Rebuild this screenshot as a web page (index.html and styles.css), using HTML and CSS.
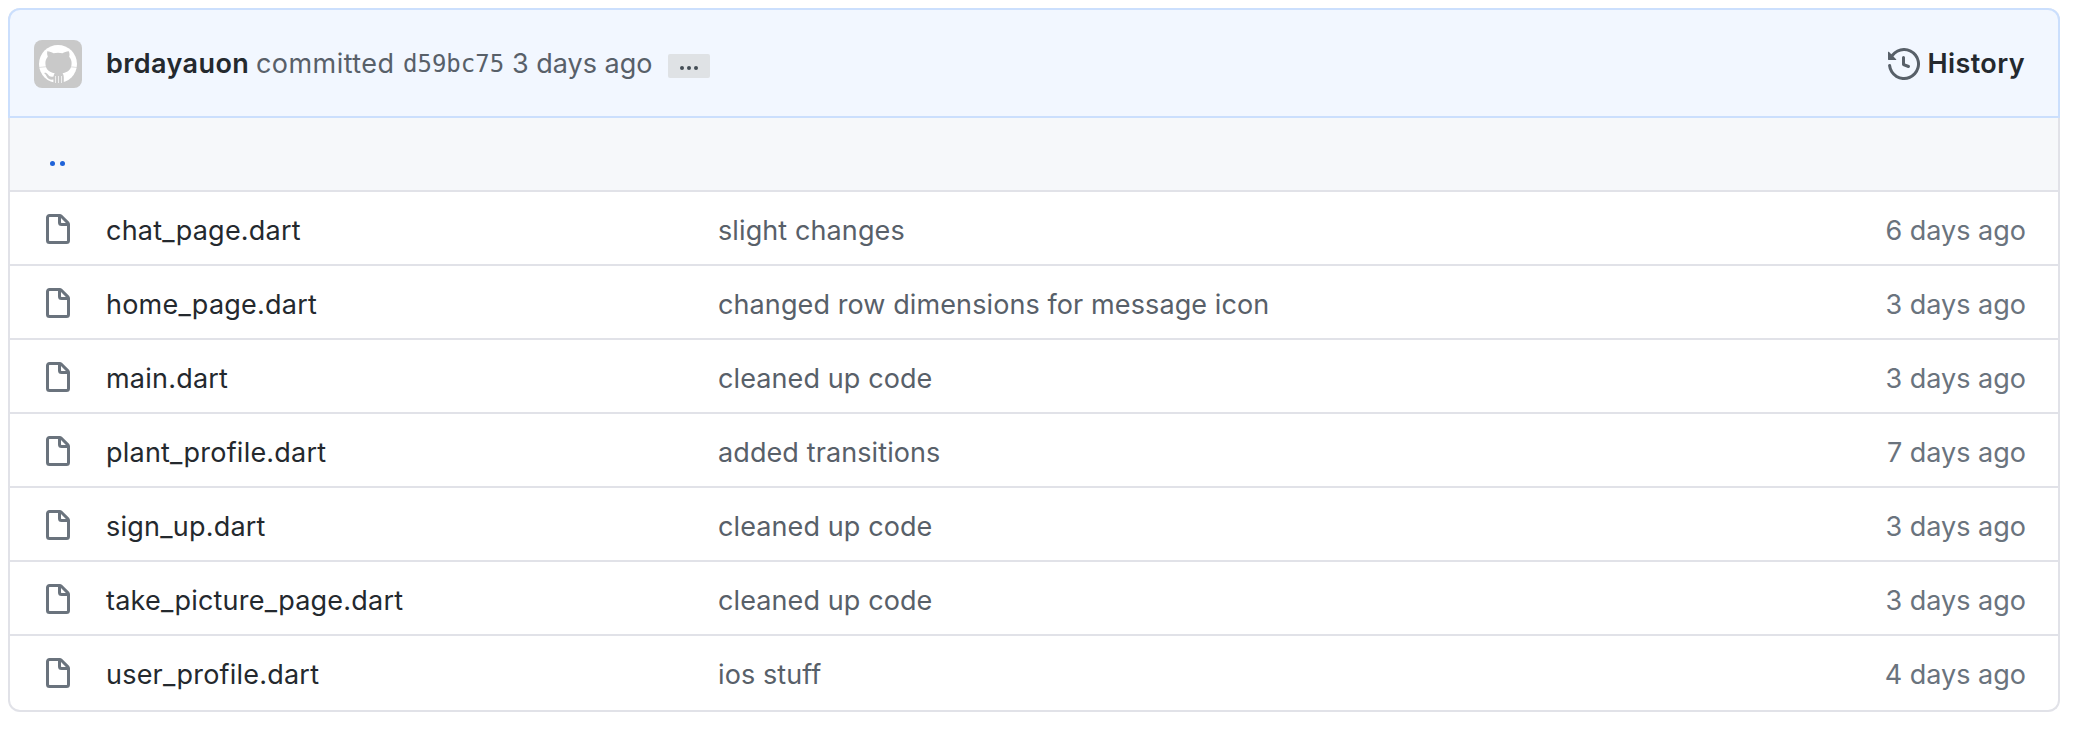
FILE: index.html
```html
<!DOCTYPE html>
<html lang="en">
<head>
<meta charset="utf-8">
<title>Files</title>
<link rel="stylesheet" href="styles.css">
</head>
<body>
<svg class="defs" aria-hidden="true">
  <symbol id="file" viewBox="0 0 16 16"><path fill-rule="evenodd" d="M3.75 1.5a.25.25 0 00-.25.25v11.5c0 .138.112.25.25.25h8.5a.25.25 0 00.25-.25V6H9.75A1.75 1.75 0 018 4.25V1.5H3.75zm5.75.56v2.19c0 .138.112.25.25.25h2.19L9.5 2.06zM2 1.75C2 .784 2.784 0 3.75 0h5.086c.464 0 .909.184 1.237.513l3.414 3.414c.329.328.513.773.513 1.237v8.086A1.75 1.75 0 0112.25 15h-8.5A1.75 1.75 0 012 13.25V1.75z"/></symbol>
</svg>
<main class="box">
  <header class="commit">
    <svg class="avatar" viewBox="0 0 48 48">
      <rect width="48" height="48" fill="#c9c9c9"/>
      <circle cx="24" cy="24" r="19" fill="#fff"/>
      <path fill="#c9c9c9" d="M13.2 11.2c2.5 0 4.5 1 6.300 2.100 3-.7 6-.7 9 0 1.800-1.100 3.800-2.100 6.300-2.100.9 2.100.9 4 .4 5.600 1.600 1.800 2.400 3.900 2.400 6.300 0 6.200-3.300 9.300-9 10.100.8 1 1.200 2.200 1.200 3.700V43H19.400v-3.400c-3.700.5-5.600-.8-6.800-3.300-.6-1.300-1.300-2.300-2.400-3 .9-1 2.400-.3 3.700 1.300 1.500 2.100 3 2.600 5.600 2 .1-1.400.5-2.500 1.200-3.400-6.200-.9-9.300-4.100-9.300-10.100 0-2.400.8-4.500 2.400-6.300-.7-1.800-.9-3.700-.6-5.600z"/>
      <path stroke="#fff" stroke-width=".9" d="M21.500 36v7M24.500 36v7M27.500 36v7" opacity=".75"/>
      <path stroke="#c9c9c9" stroke-width=".8" d="M5 27.500l7-.8M43 27.500l-7-.8" opacity=".7"/>
    </svg>
    <div class="message">
      <span class="author">brdayauon</span>
      <span class="verb">committed</span>
      <span class="sha">d59bc75</span>
      <span class="when">3 days ago</span>
      <span class="more"><i></i><i></i><i></i></span>
    </div>
    <div class="history">
      <svg class="icon" viewBox="0 0 16 16"><path fill-rule="evenodd" d="M1.643 3.143L.427 1.927A.25.25 0 000 2.104V5.75c0 .138.112.25.25.25h3.646a.25.25 0 00.177-.427L2.715 4.215a6.5 6.500 0 11-1.180 4.458.75.75 0 10-1.493.154 8.001 8.001 0 101.600-5.684zM7.750 4a.75.75 0 01.75.75v2.992l2.028.812a.75.75 0 01-.557 1.392l-2.500-1A.75.75 0 017 8.250v-3.500A.75.75 0 017.750 4z"/></svg>
      <span class="history-label">History</span>
    </div>
  </header>
  <div class="parent"><span class="dot"></span><span class="dot"></span></div>
  <div class="row"><svg class="icon"><use href="#file"/></svg><span class="name">chat_page.dart</span><span class="note">slight changes</span><span class="age">6 days ago</span></div>
  <div class="row"><svg class="icon"><use href="#file"/></svg><span class="name">home_page.dart</span><span class="note">changed row dimensions for message icon</span><span class="age">3 days ago</span></div>
  <div class="row"><svg class="icon"><use href="#file"/></svg><span class="name">main.dart</span><span class="note">cleaned up code</span><span class="age">3 days ago</span></div>
  <div class="row"><svg class="icon"><use href="#file"/></svg><span class="name">plant_profile.dart</span><span class="note">added transitions</span><span class="age">7 days ago</span></div>
  <div class="row"><svg class="icon"><use href="#file"/></svg><span class="name">sign_up.dart</span><span class="note">cleaned up code</span><span class="age">3 days ago</span></div>
  <div class="row"><svg class="icon"><use href="#file"/></svg><span class="name">take_picture_page.dart</span><span class="note">cleaned up code</span><span class="age">3 days ago</span></div>
  <div class="row"><svg class="icon"><use href="#file"/></svg><span class="name">user_profile.dart</span><span class="note">ios stuff</span><span class="age">4 days ago</span></div>
</main>
</body>
</html>
```
FILE: styles.css
```css
* { box-sizing: border-box; }
body {
  margin: 0;
  padding: 8px 14px 18px 8px;
  background: #fff;
  font: 27px/42px Inter, "Liberation Sans", sans-serif;
  color: #24292e;
}
.defs { display: none; }
.box {
  height: 704px;
  border: 2px solid #e1e2e8;
  border-top: 0;
  border-radius: 12px;
}
.commit {
  height: 110px;
  margin: 0 -2px;
  padding: 2px 33px 0 26px;
  display: flex;
  align-items: center;
  border: 2px solid #cbdffd;
  border-radius: 12px 12px 0 0;
  background: #f2f7ff;
}
.avatar { width: 48px; height: 48px; margin-left: -2px; border-radius: 8px; }
.message { display: flex; align-items: center; margin-left: 23px; color: #586069; white-space: nowrap; }
.author { width: 151px; padding-left: 1px; font-weight: 600; letter-spacing: .4px; color: #24292e; }
.verb { width: 147px; letter-spacing: .45px; }
.sha { width: 109px; font: 24px/42px "DejaVu Sans Mono", monospace; }
.when { width: 156px; }
.more {
  width: 42px;
  height: 24px;
  margin-top: 4px;
  padding-top: 4px;
  display: flex;
  align-items: center;
  justify-content: center;
  gap: 3px;
  border-radius: 2px;
  background: #dfe2e5;
}
.more i { width: 4px; height: 4px; border-radius: 50%; background: #444d56; }
.history { margin-left: auto; display: flex; align-items: center; gap: 7px; }
.history .icon { fill: #586069; }
.history-label { font-weight: 600; letter-spacing: .4px; }
.icon { width: 32px; height: 32px; flex: none; }
.parent { height: 74px; padding: 43px 40px 0; display: flex; gap: 5px; border-bottom: 2px solid #e1e2e8; background: #f6f8fa; }
.dot { width: 5px; height: 5px; border-radius: 50%; background: #1f63d8; }
.row { height: 74px; padding: 4px 32px 0; display: flex; align-items: center; border-bottom: 2px solid #e1e2e8; white-space: nowrap; }
.row:last-child { padding-top: 2px; border-bottom: 0; }
.row .icon { fill: #6a737d; }
.name { width: 612px; margin-left: 32px; padding-top: 1px; letter-spacing: .22px; }
.note { padding-top: 1px; letter-spacing: .1px; color: #586069; }
.age { margin-left: auto; padding-top: 1px; color: #6a737d; }
```
